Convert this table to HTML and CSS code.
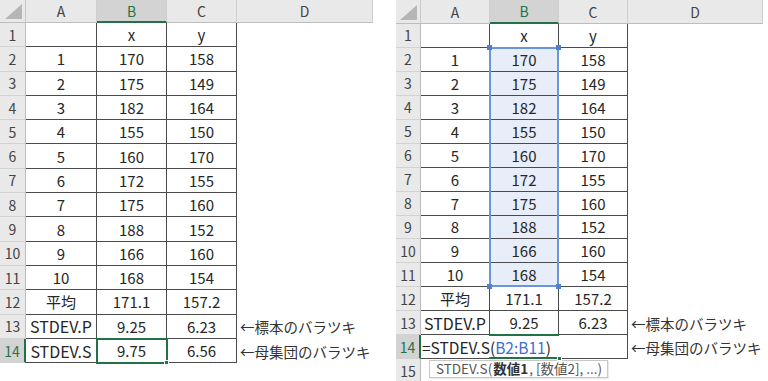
FILE: index.html
```html
<!DOCTYPE html>
<html lang="ja">
<head>
<meta charset="utf-8">
<link rel="stylesheet" href="styles.css">
</head>
<body>
<div class="page">
  <div class="sheet sheet-l">
    <div class="corner"></div><div class="ch">A</div><div class="ch hsel">B</div><div class="ch">C</div><div class="ch">D</div>
    <div class="rh">1</div><div class="c"></div><div class="c">x</div><div class="c">y</div><div class="d"></div>
    <div class="rh">2</div><div class="c">1</div><div class="c">170</div><div class="c">158</div><div class="d"></div>
    <div class="rh">3</div><div class="c">2</div><div class="c">175</div><div class="c">149</div><div class="d"></div>
    <div class="rh">4</div><div class="c">3</div><div class="c">182</div><div class="c">164</div><div class="d"></div>
    <div class="rh">5</div><div class="c">4</div><div class="c">155</div><div class="c">150</div><div class="d"></div>
    <div class="rh">6</div><div class="c">5</div><div class="c">160</div><div class="c">170</div><div class="d"></div>
    <div class="rh">7</div><div class="c">6</div><div class="c">172</div><div class="c">155</div><div class="d"></div>
    <div class="rh">8</div><div class="c">7</div><div class="c">175</div><div class="c">160</div><div class="d"></div>
    <div class="rh">9</div><div class="c">8</div><div class="c">188</div><div class="c">152</div><div class="d"></div>
    <div class="rh">10</div><div class="c">9</div><div class="c">166</div><div class="c">160</div><div class="d"></div>
    <div class="rh">11</div><div class="c">10</div><div class="c">168</div><div class="c">154</div><div class="d"></div>
    <div class="rh">12</div><div class="c">平均</div><div class="c">171.1</div><div class="c">157.2</div><div class="d"></div>
    <div class="rh">13</div><div class="c lat">STDEV.P</div><div class="c">9.25</div><div class="c">6.23</div><div class="d note">←標本のバラツキ</div>
    <div class="rh rsel">14</div><div class="c lat">STDEV.S</div><div class="c active">9.75</div><div class="c">6.56</div><div class="d note">←母集団のバラツキ</div>
  </div>

  <div class="sheet sheet-r">
    <div class="corner"></div><div class="ch">A</div><div class="ch hsel">B</div><div class="ch">C</div><div class="ch">D</div>
    <div class="rh">1</div><div class="c"></div><div class="c">x</div><div class="c">y</div><div class="d"></div>
    <div class="rh">2</div><div class="c">1</div><div class="c bs bs-top">170</div><div class="c">158</div><div class="d"></div>
    <div class="rh">3</div><div class="c">2</div><div class="c bs">175</div><div class="c">149</div><div class="d"></div>
    <div class="rh">4</div><div class="c">3</div><div class="c bs">182</div><div class="c">164</div><div class="d"></div>
    <div class="rh">5</div><div class="c">4</div><div class="c bs">155</div><div class="c">150</div><div class="d"></div>
    <div class="rh">6</div><div class="c">5</div><div class="c bs">160</div><div class="c">170</div><div class="d"></div>
    <div class="rh">7</div><div class="c">6</div><div class="c bs">172</div><div class="c">155</div><div class="d"></div>
    <div class="rh">8</div><div class="c">7</div><div class="c bs">175</div><div class="c">160</div><div class="d"></div>
    <div class="rh">9</div><div class="c">8</div><div class="c bs">188</div><div class="c">152</div><div class="d"></div>
    <div class="rh">10</div><div class="c">9</div><div class="c bs">166</div><div class="c">160</div><div class="d"></div>
    <div class="rh">11</div><div class="c">10</div><div class="c bs bs-bot">168</div><div class="c">154</div><div class="d"></div>
    <div class="rh">12</div><div class="c">平均</div><div class="c">171.1</div><div class="c">157.2</div><div class="d"></div>
    <div class="rh">13</div><div class="c lat">STDEV.P</div><div class="c">9.25</div><div class="c">6.23</div><div class="d note">←標本のバラツキ</div>
    <div class="rh rsel">14</div><div class="c formula">=STDEV.S(<span class="ref">B2:B11</span>)</div><div class="d note">←母集団のバラツキ</div>
    <div class="rh">15</div><div class="empty"><div class="tip">STDEV.S(<b>数値1</b>, [数値2], ...)</div></div>
  </div>
</div>
</body>
</html>
```

FILE: styles.css
```css
html, body {
  margin: 0;
  padding: 0;
  background: #ffffff;
  overflow: hidden;
}

.page {
  display: flex;
  gap: 23px;
  align-items: flex-start;
  font-family: "Noto Sans CJK JP", "Noto Sans", sans-serif;
  color: #262626;
}

.sheet {
  display: grid;
}

.sheet-l {
  grid-template-columns: 26px 71px 70px 70px 136px;
  grid-template-rows: 23px repeat(14, 24.3px);
}

.sheet-r {
  grid-template-columns: 25px 69px 69px 69px 135px;
  grid-template-rows: 24px repeat(15, 23.95px);
}

.sheet > div {
  box-sizing: border-box;
  min-width: 0;
}

.corner {
  background: #e9e9e9;
  border-right: 1px solid #c9c9c9;
  border-bottom: 1px solid #bdbdbd;
  position: relative;
}

.corner::after {
  content: "";
  position: absolute;
  right: 3px;
  bottom: 3px;
  width: 0;
  height: 0;
  border-left: 17px solid transparent;
  border-bottom: 15px solid #b6b6b6;
}

.ch {
  background: #e9e9e9;
  border-right: 1px solid #cfcfcf;
  border-bottom: 1px solid #bdbdbd;
  display: flex;
  align-items: center;
  justify-content: center;
  font-size: 14px;
  color: #444;
}

.ch.hsel {
  background: #d3d3d3;
  color: #217346;
  border-bottom: 2px solid #217346;
}

.rh {
  background: #e9e9e9;
  border-right: 1px solid #bdbdbd;
  border-bottom: 1px solid #d2d2d2;
  display: flex;
  align-items: center;
  justify-content: center;
  font-size: 14px;
  color: #444;
}

.rh.rsel {
  background: #d3d3d3;
  color: #217346;
  border-right: 2px solid #217346;
}

.c {
  border-right: 1px solid #4b4b4b;
  border-bottom: 1px solid #4b4b4b;
  display: flex;
  align-items: center;
  justify-content: center;
  font-size: 15px;
  white-space: nowrap;
  position: relative;
}

.c.lat {
  font-size: 16px;
}

.d {
  display: flex;
  align-items: center;
}

.note {
  padding-left: 3px;
  font-size: 14.5px;
  color: #333;
  white-space: nowrap;
}

.active {
  outline: 2px solid #217346;
  outline-offset: -1px;
  z-index: 2;
}

.active::after {
  content: "";
  position: absolute;
  right: -3px;
  bottom: -3px;
  width: 5px;
  height: 5px;
  background: #217346;
  border: 1px solid #ffffff;
  box-sizing: border-box;
}

.bs {
  background: #e8eef9;
}

.bs::before {
  content: "";
  position: absolute;
  top: 0;
  bottom: -1px;
  left: -1px;
  right: -1px;
  border-left: 2px solid #6b95d8;
  border-right: 2px solid #6b95d8;
  z-index: 1;
}

.bs-top::before {
  top: -1px;
  border-top: 2px solid #6b95d8;
}

.bs-bot::before {
  border-bottom: 2px solid #6b95d8;
}

.bs-top::after,
.bs-bot::after {
  content: "";
  position: absolute;
  left: -3px;
  width: 5px;
  height: 5px;
  background: #4f7fd0;
  box-shadow: 69px 0 0 #4f7fd0;
  z-index: 2;
}

.bs-top::after {
  top: -3px;
}

.bs-bot::after {
  bottom: -3px;
}

.formula {
  grid-column: span 3;
  justify-content: flex-start;
  padding-left: 1px;
  font-size: 15.5px;
}

.formula::before {
  content: "";
  position: absolute;
  left: 68px;
  width: 70px;
  top: -1px;
  bottom: -1px;
  border-top: 2px solid #217346;
  border-bottom: 2px solid #217346;
  box-sizing: border-box;
}

.formula::after {
  content: "";
  position: absolute;
  left: 136px;
  bottom: -3px;
  width: 5px;
  height: 5px;
  background: #217346;
  border: 1px solid #ffffff;
  box-sizing: border-box;
}

.ref {
  color: #3c6fd1;
}

.empty {
  grid-column: span 4;
  padding-left: 8px;
  padding-top: 1px;
}

.tip {
  display: flex;
  align-items: center;
  box-sizing: border-box;
  width: 179px;
  height: 18px;
  line-height: 1;
  border: 1px solid #c8c8c8;
  background: #ffffff;
  padding-left: 6px;
  font-size: 13.5px;
  color: #555;
  white-space: nowrap;
  box-shadow: 1px 1px 1px rgba(0, 0, 0, 0.08);
}

.tip b {
  color: #333;
  margin: 0 1px;
}
```
